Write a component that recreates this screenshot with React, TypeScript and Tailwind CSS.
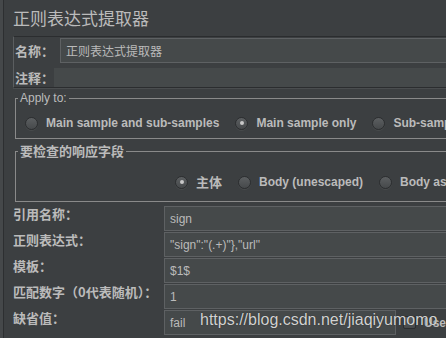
import React from 'react';

interface RadioProps {
    label: string;
    checked?: boolean;
    cjk?: boolean;
}

const Radio: React.FC<RadioProps> = ({ label, checked, cjk }) => (
    <div className="flex shrink-0 items-center gap-[8px]">
        <span className="flex h-[13px] w-[13px] items-center justify-center rounded-full border border-[#2c2e30] bg-linear-to-b from-[#5c5f61] to-[#46494b] shadow-[0_1px_0_rgba(255,255,255,0.06)]">
            {checked && <span className="h-[4px] w-[4px] rounded-full bg-[#c9c9c9]" />}
        </span>
        <span
            className={
                cjk
                    ? "font-['Noto_Sans_CJK_SC',sans-serif] text-[13px] font-bold leading-[16px] whitespace-nowrap"
                    : "font-['Liberation_Sans',sans-serif] text-[12px] font-bold leading-[16px] whitespace-nowrap"
            }
        >
            {label}
        </span>
    </div>
);

interface FieldRowProps {
    label: string;
    value: string;
}

const FieldRow: React.FC<FieldRowProps> = ({ label, value }) => (
    <div className="flex h-[25px] items-start">
        <div className="w-[151px] shrink-0 font-['Noto_Sans_CJK_SC',sans-serif] text-[13px] font-bold leading-[15px] whitespace-nowrap">
            {label}
        </div>
        <div className="flex h-[25px] flex-1 items-center border border-[#5e6163] bg-[#45494a] pl-[5px] font-['Liberation_Sans',sans-serif] text-[12px] text-[#bbbbbb]">
            {value}
        </div>
    </div>
);

const App: React.FC = () => {
    return (
        <div className="relative flex h-[338px] w-[446px] overflow-hidden bg-[#3c3f41] text-[#bbbbbb]">
            {/* left gutter */}
            <div className="w-[4px] shrink-0 border-r border-[#2d2f31] bg-[#45484a]" />

            <div className="flex w-[600px] shrink-0 flex-col pl-[9px]">
                {/* title */}
                <div className="h-[36px] pt-[8px] font-['Noto_Sans_CJK_SC',sans-serif] text-[17px] leading-[20px]">
                    正则表达式提取器
                </div>

                {/* name / comment panel */}
                <div className="flex flex-col border-y border-l border-y-[#2b2d2f] border-l-[#5b5e60] pt-[1px]">
                    <div className="flex h-[25px] items-center">
                        <div className="w-[46px] shrink-0 pl-[1px] font-['Noto_Sans_CJK_SC',sans-serif] text-[13px] font-bold leading-[16px]">
                            名称：
                        </div>
                        <div className="flex h-[25px] flex-1 items-center border border-[#5e6163] bg-[#45494a] pl-[5px] font-['Noto_Sans_CJK_SC',sans-serif] text-[12px]">
                            正则表达式提取器
                        </div>
                    </div>
                    <div className="mt-[5px] flex h-[19px] items-center">
                        <div className="w-[40px] shrink-0 pl-[1px] font-['Noto_Sans_CJK_SC',sans-serif] text-[13px] font-bold leading-[16px]">
                            注释：
                        </div>
                        <div className="h-[19px] flex-1 bg-[#45494a]" />
                    </div>
                </div>
                <div className="h-px bg-[#4a4d4f]" />

                {/* Apply to */}
                <fieldset className="mt-[2px] ml-[2px] border border-r-0 border-[#8a8a8a]">
                    <legend className="ml-[2px] px-[2px] font-['Liberation_Sans',sans-serif] text-[12px] leading-[14px]">
                        Apply to:
                    </legend>
                    <div className="mt-[8px] mb-[5px] flex h-[20px] items-center gap-[16px] pl-[9px]">
                        <Radio label="Main sample and sub-samples" />
                        <Radio label="Main sample only" checked />
                        <Radio label="Sub-samples only" />
                        <Radio label="JMeter Variable Name to use" />
                    </div>
                </fieldset>

                {/* field to check */}
                <fieldset className="mt-[4px] ml-[2px] border border-r-0 border-[#8a8a8a]">
                    <legend className="ml-[2px] px-[2px] font-['Noto_Sans_CJK_SC',sans-serif] text-[13px] font-bold leading-[16px]">
                        要检查的响应字段
                    </legend>
                    <div className="mt-[13px] mb-[9px] flex h-[20px] items-center gap-[16px] pl-[159px]">
                        <Radio label="主体" checked cjk />
                        <Radio label="Body (unescaped)" />
                        <Radio label="Body as a Document" />
                    </div>
                </fieldset>

                {/* extractor fields */}
                <div className="mt-[4px] flex flex-col gap-[1px]">
                    <FieldRow label="引用名称：" value="sign" />
                    <FieldRow label="正则表达式：" value={'"sign":"(.+)"},"url"'} />
                    <FieldRow label="模板：" value="$1$" />
                    <FieldRow label="匹配数字（0代表随机）：" value="1" />
                    <div className="flex h-[25px] items-start">
                        <div className="w-[151px] shrink-0 font-['Noto_Sans_CJK_SC',sans-serif] text-[13px] font-bold leading-[15px]">
                            缺省值：
                        </div>
                        <div className="flex h-[25px] w-[232px] shrink-0 items-center border border-[#5e6163] bg-[#45494a] pl-[5px] font-['Liberation_Sans',sans-serif] text-[12px]">
                            fail
                        </div>
                        <div className="ml-[7px] flex h-[25px] items-center gap-[8px]">
                            <span className="h-[13px] w-[13px] rounded-[2px] border border-[#2c2e30] bg-linear-to-b from-[#5c5f61] to-[#46494b]" />
                            <span className="font-['Liberation_Sans',sans-serif] text-[12px] font-bold whitespace-nowrap">
                                Use empty default value
                            </span>
                        </div>
                    </div>
                </div>
            </div>

            {/* watermark */}
            <div className="absolute top-[310px] left-[200px] font-['Liberation_Sans',sans-serif] text-[16px] leading-[20px] whitespace-nowrap text-[#d2d2d2] [text-shadow:0_0_1px_rgba(0,0,0,0.6)]">
                https://blog.csdn.net/jiaqiyumomo
            </div>
        </div>
    );
};

export default App;
